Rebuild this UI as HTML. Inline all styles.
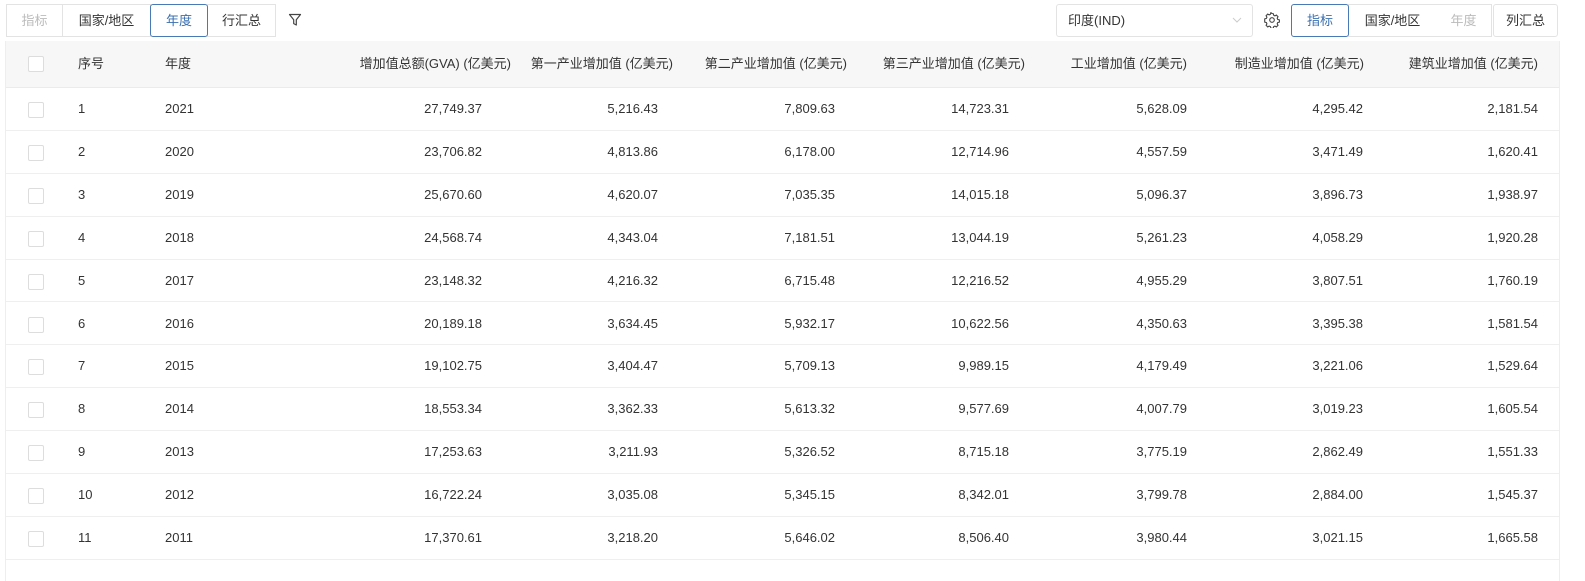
<!DOCTYPE html>
<html><head><meta charset="utf-8"><style>
*{box-sizing:border-box;margin:0;padding:0}
body{width:1585px;height:570px;overflow:hidden;background:#fff;font-family:"Liberation Sans","Noto Sans CJK SC",sans-serif;font-size:13px;color:#333;position:relative}
.b{position:absolute;top:4px;height:33px;border:1px solid #e3e3e3;line-height:31px;text-align:center;background:#fff}
.dis{color:#bbb}
.sel{border-color:#4a7ab5;color:#3a6fb0;border-radius:3px;z-index:2}
.tbl{position:absolute;left:5px;top:41px;width:1555px;height:540px;border-left:1px solid #eee;border-right:1px solid #eee}
.hd{position:absolute;left:0;top:0;width:100%;height:47px;background:#f7f7f7;border-bottom:1px solid #ebebeb}
.row{position:absolute;left:0;width:100%;height:42.9px;border-bottom:1px solid #efefef}
.c{position:absolute;top:0;line-height:42px;white-space:nowrap}
.hd .c{line-height:46px}
.cb{position:absolute;left:22px;top:14px;width:16px;height:16px;border:1px solid #ddd;border-radius:2px;background:#fff}
.hd .cb{top:15px}
.r{text-align:right}
</style></head><body>
<div class="b dis" style="left:6px;width:56px;border-right:none">指标</div>
<div class="b" style="left:62px;width:89px">国家/地区</div>
<div class="b sel" style="left:150px;width:58px">年度</div>
<div class="b" style="left:207px;width:69px">行汇总</div>
<svg style="position:absolute;left:288px;top:13px" width="14" height="14" viewBox="0 0 14 14"><path d="M1.5 1.5h11l-4.2 5.2v5.3l-2.6-1.4v-3.9z" fill="none" stroke="#444" stroke-width="1.2" stroke-linejoin="round"/></svg>
<div class="b" style="left:1056px;width:197px;text-align:left;padding-left:11px;border-radius:3px">印度(IND)<svg style="position:absolute;right:10px;top:12px" width="10" height="7" viewBox="0 0 10 7"><path d="M1 1l4 4 4-4" fill="none" stroke="#ccc" stroke-width="1"/></svg></div>
<svg style="position:absolute;left:1264px;top:12px" width="16" height="16" viewBox="0 0 16 16"><path d="M8 1.5l1.3.2.4 1.6 1.2.6 1.5-.8 1.6 1.6-.8 1.5.5 1.2 1.7.5v2.2l-1.7.5-.5 1.2.8 1.5-1.6 1.6-1.5-.8-1.2.5-.4 1.7H6.9l-.5-1.7-1.2-.5-1.5.8-1.6-1.6.8-1.5-.5-1.2-1.7-.5V6.9l1.7-.5.5-1.2-.8-1.5 1.6-1.6 1.5.8 1.2-.6.5-1.6z" fill="none" stroke="#444" stroke-width="1.1"/><circle cx="8" cy="8" r="2.3" fill="none" stroke="#444" stroke-width="1.1"/></svg>
<div class="b sel" style="left:1291px;width:58px">指标</div>
<div class="b" style="left:1348px;width:89px">国家/地区</div>
<div class="b dis" style="left:1436px;width:56px;border-left:none">年度</div>
<div class="b" style="left:1493px;width:65px;border-radius:3px">列汇总</div>
<div class="tbl">
<div class="hd"><div class="cb"></div><span class="c" style="left:72px">序号</span><span class="c" style="left:159px">年度</span>
<span class="c r" style="right:1048px">增加值总额(GVA) (亿美元)</span><span class="c r" style="right:886px">第一产业增加值 (亿美元)</span><span class="c r" style="right:712px">第二产业增加值 (亿美元)</span><span class="c r" style="right:534px">第三产业增加值 (亿美元)</span><span class="c r" style="right:372px">工业增加值 (亿美元)</span><span class="c r" style="right:195px">制造业增加值 (亿美元)</span><span class="c r" style="right:21px">建筑业增加值 (亿美元)</span></div>
<div class="row" style="top:47px"><div class="cb"></div><span class="c" style="left:72px">1</span><span class="c" style="left:159px">2021</span><span class="c" style="right:1077px">27,749.37</span><span class="c" style="right:901px">5,216.43</span><span class="c" style="right:724px">7,809.63</span><span class="c" style="right:550px">14,723.31</span><span class="c" style="right:372px">5,628.09</span><span class="c" style="right:196px">4,295.42</span><span class="c" style="right:21px">2,181.54</span></div>
<div class="row" style="top:89.9px"><div class="cb"></div><span class="c" style="left:72px">2</span><span class="c" style="left:159px">2020</span><span class="c" style="right:1077px">23,706.82</span><span class="c" style="right:901px">4,813.86</span><span class="c" style="right:724px">6,178.00</span><span class="c" style="right:550px">12,714.96</span><span class="c" style="right:372px">4,557.59</span><span class="c" style="right:196px">3,471.49</span><span class="c" style="right:21px">1,620.41</span></div>
<div class="row" style="top:132.8px"><div class="cb"></div><span class="c" style="left:72px">3</span><span class="c" style="left:159px">2019</span><span class="c" style="right:1077px">25,670.60</span><span class="c" style="right:901px">4,620.07</span><span class="c" style="right:724px">7,035.35</span><span class="c" style="right:550px">14,015.18</span><span class="c" style="right:372px">5,096.37</span><span class="c" style="right:196px">3,896.73</span><span class="c" style="right:21px">1,938.97</span></div>
<div class="row" style="top:175.7px"><div class="cb"></div><span class="c" style="left:72px">4</span><span class="c" style="left:159px">2018</span><span class="c" style="right:1077px">24,568.74</span><span class="c" style="right:901px">4,343.04</span><span class="c" style="right:724px">7,181.51</span><span class="c" style="right:550px">13,044.19</span><span class="c" style="right:372px">5,261.23</span><span class="c" style="right:196px">4,058.29</span><span class="c" style="right:21px">1,920.28</span></div>
<div class="row" style="top:218.6px"><div class="cb"></div><span class="c" style="left:72px">5</span><span class="c" style="left:159px">2017</span><span class="c" style="right:1077px">23,148.32</span><span class="c" style="right:901px">4,216.32</span><span class="c" style="right:724px">6,715.48</span><span class="c" style="right:550px">12,216.52</span><span class="c" style="right:372px">4,955.29</span><span class="c" style="right:196px">3,807.51</span><span class="c" style="right:21px">1,760.19</span></div>
<div class="row" style="top:261.5px"><div class="cb"></div><span class="c" style="left:72px">6</span><span class="c" style="left:159px">2016</span><span class="c" style="right:1077px">20,189.18</span><span class="c" style="right:901px">3,634.45</span><span class="c" style="right:724px">5,932.17</span><span class="c" style="right:550px">10,622.56</span><span class="c" style="right:372px">4,350.63</span><span class="c" style="right:196px">3,395.38</span><span class="c" style="right:21px">1,581.54</span></div>
<div class="row" style="top:304.4px"><div class="cb"></div><span class="c" style="left:72px">7</span><span class="c" style="left:159px">2015</span><span class="c" style="right:1077px">19,102.75</span><span class="c" style="right:901px">3,404.47</span><span class="c" style="right:724px">5,709.13</span><span class="c" style="right:550px">9,989.15</span><span class="c" style="right:372px">4,179.49</span><span class="c" style="right:196px">3,221.06</span><span class="c" style="right:21px">1,529.64</span></div>
<div class="row" style="top:347.3px"><div class="cb"></div><span class="c" style="left:72px">8</span><span class="c" style="left:159px">2014</span><span class="c" style="right:1077px">18,553.34</span><span class="c" style="right:901px">3,362.33</span><span class="c" style="right:724px">5,613.32</span><span class="c" style="right:550px">9,577.69</span><span class="c" style="right:372px">4,007.79</span><span class="c" style="right:196px">3,019.23</span><span class="c" style="right:21px">1,605.54</span></div>
<div class="row" style="top:390.2px"><div class="cb"></div><span class="c" style="left:72px">9</span><span class="c" style="left:159px">2013</span><span class="c" style="right:1077px">17,253.63</span><span class="c" style="right:901px">3,211.93</span><span class="c" style="right:724px">5,326.52</span><span class="c" style="right:550px">8,715.18</span><span class="c" style="right:372px">3,775.19</span><span class="c" style="right:196px">2,862.49</span><span class="c" style="right:21px">1,551.33</span></div>
<div class="row" style="top:433.1px"><div class="cb"></div><span class="c" style="left:72px">10</span><span class="c" style="left:159px">2012</span><span class="c" style="right:1077px">16,722.24</span><span class="c" style="right:901px">3,035.08</span><span class="c" style="right:724px">5,345.15</span><span class="c" style="right:550px">8,342.01</span><span class="c" style="right:372px">3,799.78</span><span class="c" style="right:196px">2,884.00</span><span class="c" style="right:21px">1,545.37</span></div>
<div class="row" style="top:476px"><div class="cb"></div><span class="c" style="left:72px">11</span><span class="c" style="left:159px">2011</span><span class="c" style="right:1077px">17,370.61</span><span class="c" style="right:901px">3,218.20</span><span class="c" style="right:724px">5,646.02</span><span class="c" style="right:550px">8,506.40</span><span class="c" style="right:372px">3,980.44</span><span class="c" style="right:196px">3,021.15</span><span class="c" style="right:21px">1,665.58</span></div>
</div>
</body></html>
